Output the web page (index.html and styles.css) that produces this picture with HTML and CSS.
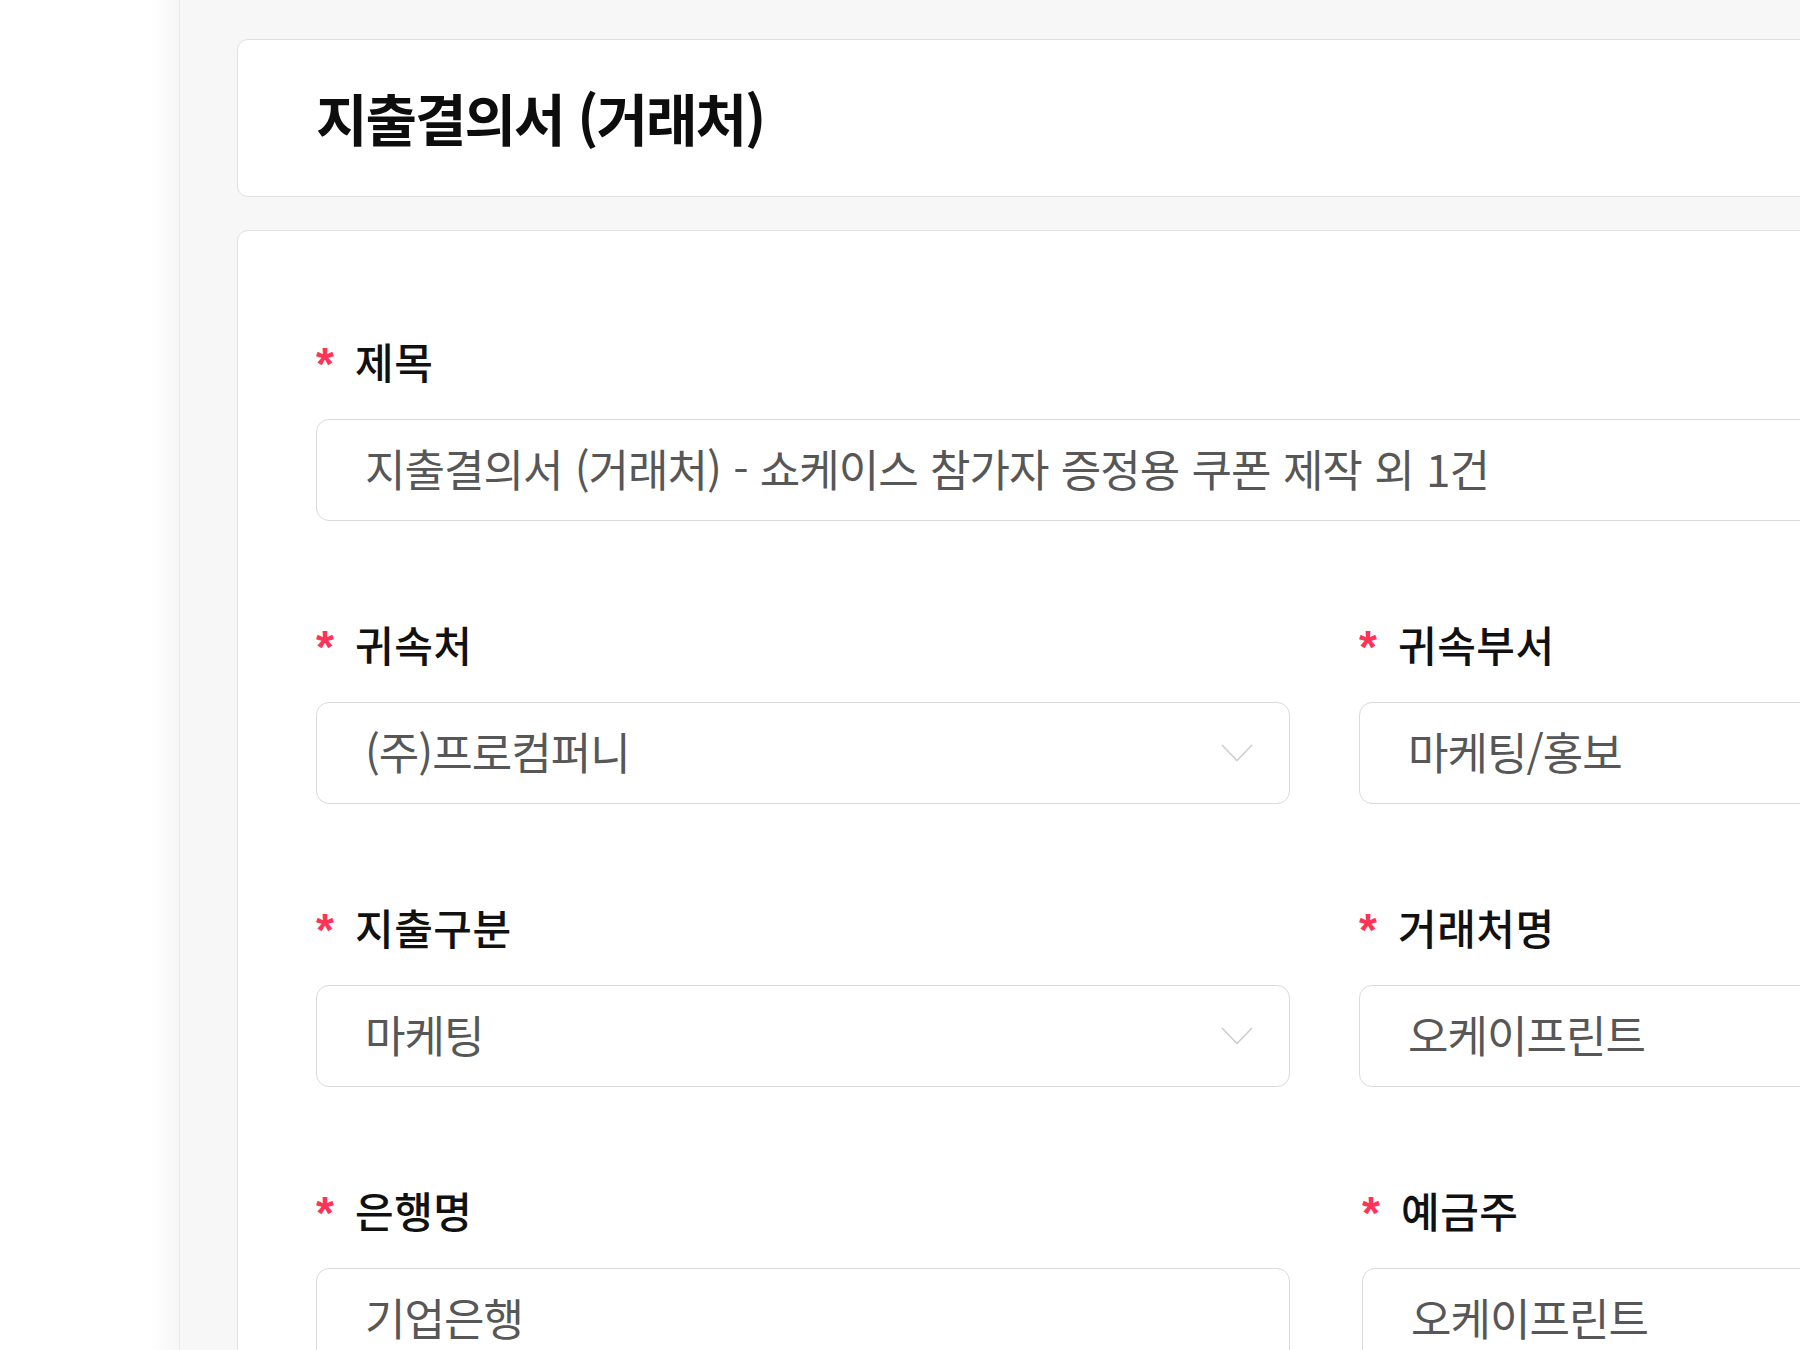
FILE: index.html
```html
<!DOCTYPE html>
<html lang="ko">
<head>
<meta charset="utf-8">
<title>지출결의서 (거래처)</title>
<link rel="stylesheet" href="styles.css">
</head>
<body>
<div class="app">
  <aside class="sidebar"></aside>
  <main class="main">
    <section class="card head-card">
      <h1 class="title">지출결의서 (거래처)</h1>
    </section>
    <section class="card form-card">
      <div class="field">
        <div class="label"><span class="req">*</span><span>제목</span></div>
        <div class="control">지출결의서 (거래처) - 쇼케이스 참가자 증정용 쿠폰 제작 외 1건</div>
      </div>
      <div class="grid">
        <div class="field">
          <div class="label"><span class="req">*</span><span>귀속처</span></div>
          <div class="control select"><span>(주)프로컴퍼니</span>
            <svg class="chev" width="32" height="18" viewBox="0 0 32 18"><polyline points="1,1 16,16.5 31,1" fill="none" stroke="#cfcfcf" stroke-width="1.6"/></svg>
          </div>
        </div>
        <div class="field">
          <div class="label"><span class="req">*</span><span>귀속부서</span></div>
          <div class="control">마케팅/홍보</div>
        </div>
        <div class="field">
          <div class="label"><span class="req">*</span><span>지출구분</span></div>
          <div class="control select"><span>마케팅</span>
            <svg class="chev" width="32" height="18" viewBox="0 0 32 18"><polyline points="1,1 16,16.5 31,1" fill="none" stroke="#cfcfcf" stroke-width="1.6"/></svg>
          </div>
        </div>
        <div class="field">
          <div class="label"><span class="req">*</span><span>거래처명</span></div>
          <div class="control">오케이프린트</div>
        </div>
        <div class="field">
          <div class="label"><span class="req">*</span><span>은행명</span></div>
          <div class="control">기업은행</div>
        </div>
        <div class="field shifted">
          <div class="label"><span class="req">*</span><span>예금주</span></div>
          <div class="control">오케이프린트</div>
        </div>
      </div>
    </section>
  </main>
</div>
</body>
</html>
```
FILE: styles.css
```css
* { box-sizing: border-box; }
html, body {
  margin: 0;
  padding: 0;
  width: 1800px;
  height: 1350px;
  overflow: hidden;
  background: #f7f7f7;
  font-family: "Noto Sans CJK KR", "Noto Sans", sans-serif;
}
.app {
  display: flex;
  width: 1800px;
  height: 1350px;
}
.sidebar {
  flex: 0 0 180px;
  background: linear-gradient(to right, #ffffff 0%, #ffffff 84%, #f7f7f7 100%);
  border-right: 1px solid #e9e9e9;
}
.main {
  flex: 1;
  overflow: hidden;
  background: #f7f7f7;
  padding: 39px 0 0 57px;
}
.card {
  width: 2180px;
  background: #ffffff;
  border: 1px solid #e1e1e1;
  border-radius: 11px;
}
.head-card {
  height: 158px;
  display: flex;
  align-items: center;
  padding-left: 78px;
}
.title {
  margin: 0;
  font-size: 56px;
  font-weight: 700;
  letter-spacing: -2px;
  line-height: 64px;
  color: #0d0d0d;
  padding-bottom: 2px;
}
.form-card {
  margin-top: 33px;
  height: 1400px;
  padding: 105px 78px 0 78px;
}
.field {
  display: flex;
  flex-direction: column;
}
.label {
  display: flex;
  align-items: flex-start;
  height: 50px;
  line-height: 50px;
  font-size: 42px;
  font-weight: 500;
  letter-spacing: 0.5px;
  color: #111111;
  margin-bottom: 33px;
}
.req {
  color: #ff3358;
  font-family: "Liberation Sans", sans-serif;
  font-size: 46px;
  font-weight: 700;
  letter-spacing: 0;
  width: 39px;
  line-height: 50px;
  padding-top: 3px;
}
.control {
  height: 102px;
  border: 1px solid #dadada;
  border-radius: 13px;
  background: #ffffff;
  display: flex;
  align-items: center;
  padding-left: 48px;
  padding-right: 36px;
  padding-bottom: 4px;
  font-size: 44px;
  letter-spacing: -1px;
  word-spacing: 1px;
  color: #575757;
  white-space: nowrap;
}
.select {
  justify-content: space-between;
}
.chev {
  flex: 0 0 auto;
  margin-top: 4px;
}
.grid {
  display: grid;
  grid-template-columns: 974px 974px;
  column-gap: 69px;
  row-gap: 98px;
  margin-top: 98px;
}
.shifted {
  margin-left: 3px;
}
```
